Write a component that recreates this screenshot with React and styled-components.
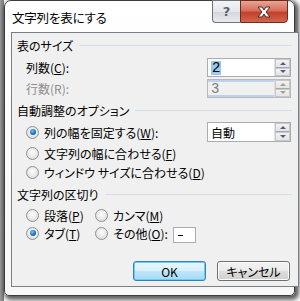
import React from 'react';
import styled, { createGlobalStyle } from 'styled-components';

const Global = createGlobalStyle`
  html, body {
    margin: 0;
    padding: 0;
    background: #ffffff;
    width: 300px;
    height: 301px;
    overflow: hidden;
  }
  body {
    font-family: "Noto Sans CJK JP", "Noto Sans", sans-serif;
    font-feature-settings: "palt";
    font-size: 12px;
    color: #000;
  }
`;

const Screen = styled.div`
  width: 300px;
  height: 301px;
  background: linear-gradient(90deg, #9a9a9a 0, #7a7a7a 4px, #fff 4px);
  display: flex;
`;

const Frame = styled.div`
  margin-left: 4px;
  width: 289px;
  height: 294px;
  background: linear-gradient(180deg, #ffffff 0%, #f7f7f7 100%);
  border: 1px solid #3c3c3c;
  border-radius: 7px 7px 5px 5px;
  box-shadow: 2px 2px 4px 2px rgba(40, 40, 40, 0.75);
  display: flex;
  flex-direction: column;
`;

const TitleBar = styled.div`
  height: 31px;
  display: flex;
  align-items: flex-start;
  padding-left: 7px;
`;

const Title = styled.div`
  font-size: 12.5px;
  line-height: 14px;
  margin-top: 10px;
  letter-spacing: -0.2px;
`;

const CaptionButtons = styled.div`
  margin-left: auto;
  margin-right: 6px;
  margin-top: -1px;
  display: flex;
`;

const HelpBtn = styled.div`
  width: 27px;
  height: 21px;
  border: 1px solid #6e7378;
  border-right: none;
  border-radius: 0 0 0 4px;
  background: linear-gradient(180deg, #f4f6f8 0%, #e3e6ea 50%, #d2d6db 51%, #e8ebee 100%);
  display: flex;
  align-items: center;
  justify-content: center;
  color: #5a5f66;
  font-family: "DejaVu Sans", sans-serif;
  font-weight: bold;
  font-size: 13px;
  text-shadow: 0 0 1px #fff;
`;

const CloseBtn = styled.div`
  width: 46px;
  height: 21px;
  border: 1px solid #6b2a22;
  border-radius: 0 0 4px 0;
  background: linear-gradient(180deg, #e8a593 0%, #d9705c 45%, #c4402a 55%, #d2664e 100%);
  display: flex;
  align-items: center;
  justify-content: center;
`;

const Client = styled.div`
  margin-left: 6px;
  width: 275px;
  height: 253px;
  border: 1px solid #7a7f86;
  background: #f0f0f0;
  padding: 0 6px 0 5px;
  display: flex;
  flex-direction: column;
`;

const GroupHeader = styled.div`
  height: ${p => p.h}px;
  display: flex;
  align-items: center;
  gap: 6px;
  &::after {
    content: "";
    flex: 1;
    height: 1px;
    background: #d5dfe5;
    margin-top: 1px;
  }
`;

const Row = styled.div`
  height: ${p => p.h}px;
  display: flex;
  align-items: center;
  padding-left: ${p => p.indent ?? 9}px;
`;

const Label = styled.span`
  color: ${p => (p.disabled ? '#8d8d8d' : '#000')};
  white-space: nowrap;
`;

const U = styled.span`
  text-decoration: underline;
  text-underline-offset: 1px;
`;

const Spacer = styled.div`
  flex: 1;
`;

const Spin = styled.div`
  width: 82px;
  height: ${p => p.h || 17}px;
  border: 1px solid ${p => (p.disabled ? '#b6babf' : '#a9adb3')};
  background: ${p => (p.disabled ? '#f0f0f0' : '#fff')};
  display: flex;
  align-items: stretch;
  box-sizing: content-box;
  margin-right: 1px;
`;

const SpinText = styled.div`
  flex: 1;
  display: flex;
  align-items: center;
  padding-left: 3px;
  font-family: ${p => (p.mono ? '"Liberation Mono", monospace' : 'inherit')};
  font-size: ${p => (p.mono ? '14px' : '12px')};
  color: ${p => (p.disabled ? '#7a7a7a' : '#000')};
  border-top: ${p => (p.disabled ? '2px solid #b9d4ec' : 'none')};
  border-bottom: ${p => (p.disabled ? '2px solid #b9d4ec' : 'none')};
`;

const Selected = styled.span`
  background: #99c9ef;
  line-height: 14px;
  padding: 0 1px;
`;

const SpinButtons = styled.div`
  width: 15px;
  display: flex;
  flex-direction: column;
  border-left: 1px solid #e0e0e0;
  background: ${p => (p.disabled ? '#f0f0f0' : '#f4f4f4')};
`;

const SpinHalf = styled.div`
  flex: 1;
  display: flex;
  align-items: center;
  justify-content: center;
  background: linear-gradient(180deg, #f2f2f2 0%, #e4e4e4 100%);
  border: 1px solid #c8c8c8;
  &:first-child {
    border-bottom: 1px solid #a9a9a9;
  }
`;

const Arrow = styled.div`
  width: 0;
  height: 0;
  border-left: 3px solid transparent;
  border-right: 3px solid transparent;
  ${p =>
    p.down
      ? `border-top: 3px solid ${p.disabled ? '#a0a0a0' : '#4b5d8f'};`
      : `border-bottom: 3px solid ${p.disabled ? '#a0a0a0' : '#4b5d8f'};`}
`;

const Radio = styled.span`
  width: 11px;
  height: 11px;
  border-radius: 50%;
  border: 1px solid #8f9091;
  background: radial-gradient(circle at 50% 40%, #fdfdfd 0%, #e6e6e6 60%, #cfcfcf 100%);
  margin-right: 5px;
  display: inline-flex;
  align-items: center;
  justify-content: center;
  flex-shrink: 0;
  &::after {
    content: "";
    display: ${p => (p.checked ? 'block' : 'none')};
    width: 6px;
    height: 6px;
    border-radius: 50%;
    background: radial-gradient(circle at 40% 35%, #7cc1f2 0%, #1f6fbd 55%, #0b3f7a 100%);
    box-shadow: 0 0 0 1px #e8f2fb;
  }
`;

const RadioItem = styled.label`
  display: flex;
  align-items: center;
  width: ${p => p.w || 'auto'};
`;

const SmallInput = styled.div`
  width: 23px;
  height: 16px;
  border: 1px solid #a9adb3;
  background: #fff;
  margin-left: 5px;
  margin-top: 4px;
  display: flex;
  align-items: center;
  padding-left: 4px;
  box-sizing: border-box;
`;

const Dash = styled.span`
  display: block;
  width: 5px;
  height: 1px;
  background: #000;
`;

const ButtonRow = styled.div`
  margin-top: auto;
  margin-bottom: 5px;
  display: flex;
  justify-content: flex-end;
  gap: 11px;
  padding-right: 2px;
`;

const Button = styled.div`
  width: 71px;
  height: 18px;
  border: 1px solid ${p => (p.primary ? '#3c7fb1' : '#707070')};
  border-radius: 3px;
  background: ${p =>
    p.primary
      ? 'linear-gradient(180deg, #eaf6fd 0%, #d9f0fc 50%, #bee6fd 51%, #a7d9f5 100%)'
      : 'linear-gradient(180deg, #f2f2f2 0%, #ebebeb 50%, #dddddd 51%, #cfcfcf 100%)'};
  box-shadow: inset 0 0 0 1px ${p => (p.primary ? '#5fd2f9' : '#fbfbfb')};
  display: flex;
  align-items: center;
  justify-content: center;
  font-size: 12px;
`;

const XIcon = () => (
  <svg width="16" height="12" viewBox="0 0 16 12">
    <path
      d="M2 1 H6 L8 4 L10 1 H14 L10 6 L14 11 H10 L8 8 L6 11 H2 L6 6 Z"
      fill="#fff"
      stroke="#4a2a28"
      strokeWidth="1"
    />
  </svg>
);

export default function App() {
  return (
    <>
      <Global />
      <Screen>
        <Frame>
          <TitleBar>
            <Title>文字列を表にする</Title>
            <CaptionButtons>
              <HelpBtn>?</HelpBtn>
              <CloseBtn>
                <XIcon />
              </CloseBtn>
            </CaptionButtons>
          </TitleBar>
          <Client>
            <GroupHeader h={24}>
              <Label>表のサイズ</Label>
            </GroupHeader>
            <Row h={21}>
              <Label>列数(<U>C</U>):</Label>
              <Spacer />
              <Spin>
                <SpinText mono>
                  <Selected>2</Selected>
                </SpinText>
                <SpinButtons>
                  <SpinHalf><Arrow /></SpinHalf>
                  <SpinHalf><Arrow down /></SpinHalf>
                </SpinButtons>
              </Spin>
            </Row>
            <Row h={21}>
              <Label disabled>行数(R):</Label>
              <Spacer />
              <Spin disabled>
                <SpinText mono disabled>3</SpinText>
                <SpinButtons disabled>
                  <SpinHalf><Arrow disabled /></SpinHalf>
                  <SpinHalf><Arrow down disabled /></SpinHalf>
                </SpinButtons>
              </Spin>
            </Row>
            <GroupHeader h={22}>
              <Label>自動調整のオプション</Label>
            </GroupHeader>
            <Row h={22}>
              <RadioItem>
                <Radio checked />
                <Label>列の幅を固定する(<U>W</U>):</Label>
              </RadioItem>
              <Spacer />
              <Spin h={18}>
                <SpinText>自動</SpinText>
                <SpinButtons>
                  <SpinHalf><Arrow /></SpinHalf>
                  <SpinHalf><Arrow down /></SpinHalf>
                </SpinButtons>
              </Spin>
            </Row>
            <Row h={20}>
              <RadioItem>
                <Radio />
                <Label>文字列の幅に合わせる(<U>F</U>)</Label>
              </RadioItem>
            </Row>
            <Row h={19}>
              <RadioItem>
                <Radio />
                <Label>ウィンドウ サイズに合わせる(<U>D</U>)</Label>
              </RadioItem>
            </Row>
            <GroupHeader h={24}>
              <Label>文字列の区切り</Label>
            </GroupHeader>
            <Row h={18}>
              <RadioItem w="69px">
                <Radio />
                <Label>段落(<U>P</U>)</Label>
              </RadioItem>
              <RadioItem>
                <Radio />
                <Label>カンマ(<U>M</U>)</Label>
              </RadioItem>
            </Row>
            <Row h={18}>
              <RadioItem w="69px">
                <Radio checked />
                <Label>タブ(<U>T</U>)</Label>
              </RadioItem>
              <RadioItem>
                <Radio />
                <Label>その他(<U>O</U>):</Label>
              </RadioItem>
              <SmallInput>
                <Dash />
              </SmallInput>
            </Row>
            <ButtonRow>
              <Button primary>OK</Button>
              <Button>キャンセル</Button>
            </ButtonRow>
          </Client>
        </Frame>
      </Screen>
    </>
  );
}
